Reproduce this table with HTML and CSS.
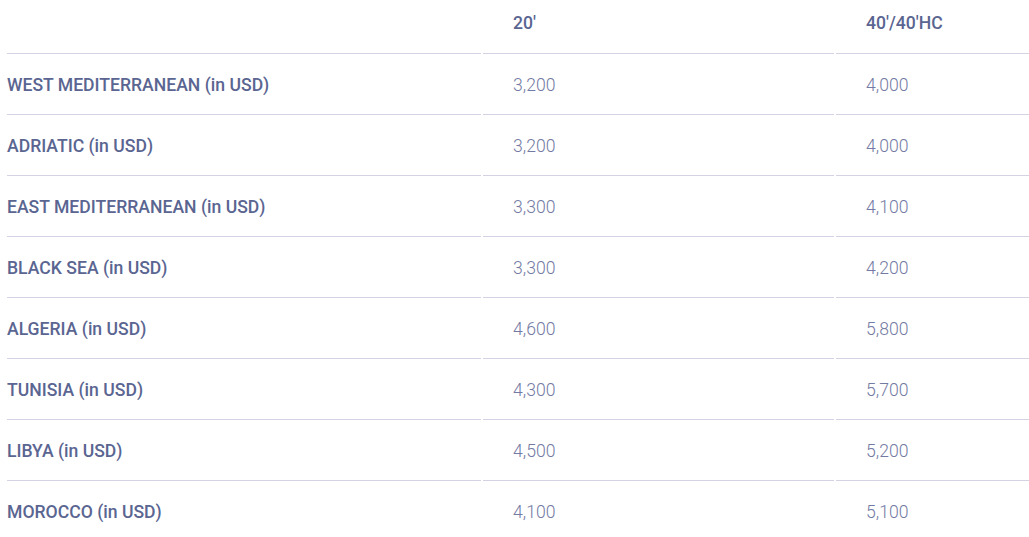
FILE: index.html
```html
<!DOCTYPE html>
<html>
<head>
<meta charset="utf-8">
<link rel="stylesheet" href="styles.css">
</head>
<body>
<table class="rates">
  <thead>
    <tr><th class="label"></th><th>20'</th><th>40'/40'HC</th></tr>
  </thead>
  <tbody>
    <tr><td class="label">WEST MEDITERRANEAN (in USD)</td><td>3,200</td><td>4,000</td></tr>
    <tr><td class="label">ADRIATIC (in USD)</td><td>3,200</td><td>4,000</td></tr>
    <tr><td class="label">EAST MEDITERRANEAN (in USD)</td><td>3,300</td><td>4,100</td></tr>
    <tr><td class="label">BLACK SEA (in USD)</td><td>3,300</td><td>4,200</td></tr>
    <tr><td class="label">ALGERIA (in USD)</td><td>4,600</td><td>5,800</td></tr>
    <tr><td class="label">TUNISIA (in USD)</td><td>4,300</td><td>5,700</td></tr>
    <tr><td class="label">LIBYA (in USD)</td><td>4,500</td><td>5,200</td></tr>
    <tr><td class="label">MOROCCO (in USD)</td><td>4,100</td><td>5,100</td></tr>
  </tbody>
</table>
</body>
</html>
```

FILE: styles.css
```css
html, body {
  margin: 0;
  padding: 0;
  background: #ffffff;
  overflow: hidden;
}
body {
  padding: 0 0 0 5px;
  font-family: Roboto, "Liberation Sans", sans-serif;
}
.rates {
  border-collapse: separate;
  border-spacing: 2px 0;
  width: 1030px;
  table-layout: fixed;
}
.rates th, .rates td {
  height: 59px;
  padding: 1px 0 0 30px;
  text-align: left;
  vertical-align: middle;
  font-size: 17.6px;
  border-bottom: 1px solid #d3d3e3;
}
.rates th {
  height: 46px;
  padding-top: 0;
  padding-bottom: 7px;
  color: #5a6591;
  font-weight: 500;
}
.rates tbody td {
  color: #737aa3;
  font-weight: 300;
}
.rates .label {
  width: 474px;
  padding-left: 0;
}
.rates th:nth-child(2) {
  width: 321px;
}
.rates tbody td.label {
  color: #5a6591;
  font-weight: 500;
}
.rates tbody tr:last-child td {
  border-bottom: none;
}
```
